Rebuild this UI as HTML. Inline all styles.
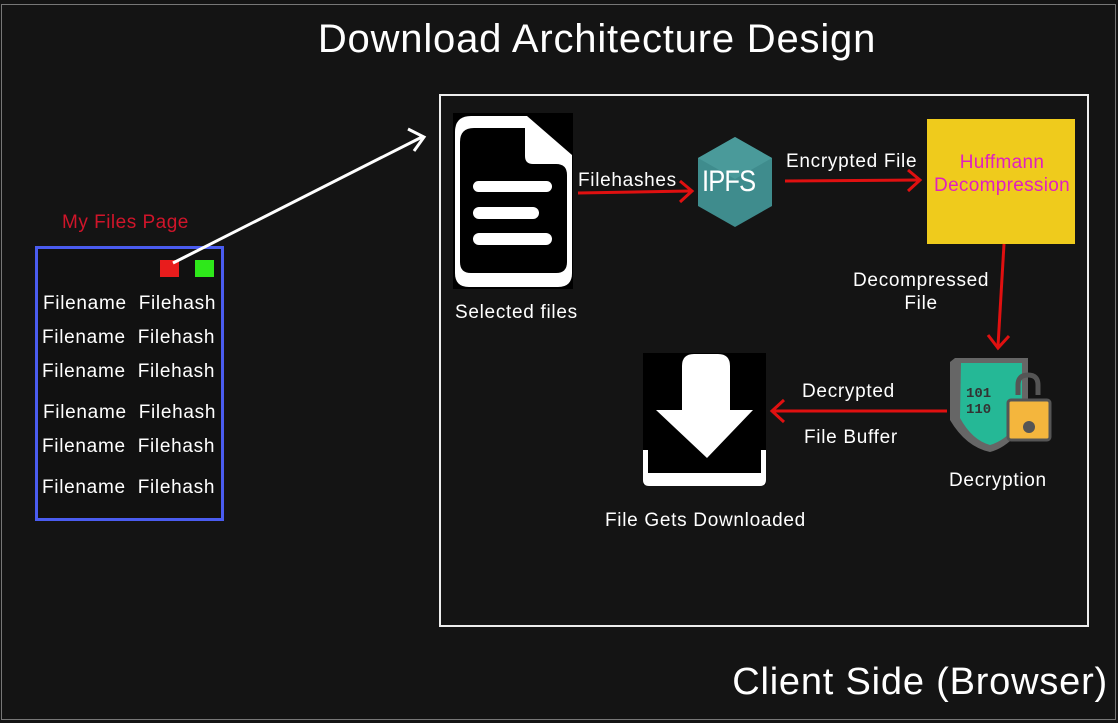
<!DOCTYPE html>
<html><head><style>
body{margin:0;width:1118px;height:723px;background:#141414;overflow:hidden;position:relative;font-family:"Liberation Sans",sans-serif;color:#fff}
.a{position:absolute;white-space:nowrap}
.t{font-size:19px;letter-spacing:0.7px}
</style></head><body>
<div class="a" style="left:1px;top:4px;width:1113px;height:714px;border:1px solid #777"></div>
<div class="a" style="left:0;top:17px;width:1194px;text-align:center;font-size:40px;letter-spacing:0.8px">Download Architecture Design</div>
<div class="a" style="left:439px;top:94px;width:646px;height:529px;border:2px solid #eee"></div>
<div class="a" style="right:10px;top:661px;font-size:38px;letter-spacing:0.8px">Client Side (Browser)</div>
<div class="a" style="left:62px;top:212px;font-size:19px;letter-spacing:0.5px;color:#d0152a">My Files Page</div>
<div class="a" style="left:35px;top:246px;width:183px;height:269px;border:3px solid #4a5cf0;background:#111"></div>
<div class="a" style="left:160px;top:260px;width:19px;height:17px;background:#e81c1c"></div>
<div class="a" style="left:195px;top:260px;width:19px;height:17px;background:#2ee81a"></div>
<div class="a t" style="left:43px;top:293px">Filename&nbsp; Filehash</div>
<div class="a t" style="left:42px;top:327px">Filename&nbsp; Filehash</div>
<div class="a t" style="left:42px;top:361px">Filename&nbsp; Filehash</div>
<div class="a t" style="left:43px;top:402px">Filename&nbsp; Filehash</div>
<div class="a t" style="left:42px;top:436px">Filename&nbsp; Filehash</div>
<div class="a t" style="left:42px;top:477px">Filename&nbsp; Filehash</div>
<svg class="a" style="left:0;top:0" width="1118" height="723">
<line x1="173" y1="263" x2="422" y2="137" stroke="#fff" stroke-width="3"/>
<polyline points="408,129 424,137 414,151" fill="none" stroke="#fff" stroke-width="3"/>
<rect x="453" y="113" width="120" height="176" fill="#000"/>
<path d="M455 132 Q455 116 471 116 H527 L572 155 V273 Q572 287 558 287 H469 Q455 287 455 273Z" fill="#fff"/>
<path d="M460 142 Q460 128 474 128 H525 V156 Q525 164 533 164 H556 Q567 164 567 175 V262 Q567 273 556 273 H471 Q460 273 460 262Z" fill="#000"/>
<rect x="473" y="181" width="79" height="11" rx="5.5" fill="#fff"/>
<rect x="473" y="207" width="66" height="12" rx="6" fill="#fff"/>
<rect x="473" y="233" width="79" height="12" rx="6" fill="#fff"/>
<line x1="578" y1="193" x2="690" y2="191" stroke="#e01010" stroke-width="3"/>
<polyline points="680,181 692,191 680,202" fill="none" stroke="#e01010" stroke-width="3"/>
<polygon points="735,137 772,158 772,206 735,227 698,206 698,158" fill="#3f8c8d"/>
<polygon points="735,137 772,158 735,179 698,158" fill="#4a9a9a"/>
<line x1="785" y1="181" x2="918" y2="180" stroke="#e01010" stroke-width="3"/>
<polyline points="908,170 920,180 908,191" fill="none" stroke="#e01010" stroke-width="3"/>
<rect x="927" y="119" width="148" height="125" fill="#efcb1c"/>
<line x1="1004" y1="244" x2="998" y2="346" stroke="#e01010" stroke-width="3"/>
<polyline points="988,335 998,348 1009,336" fill="none" stroke="#e01010" stroke-width="3"/>
<path d="M955 358 H1028 V420 Q1010 447 990 452 Q966 447 950 420 V362Z" fill="#666"/>
<path d="M961 363 H1022 V418 Q1008 440 990 445 Q972 440 960 418Z" fill="#25b896"/>
<path d="M1018 395 V385 Q1018 375 1028 375 Q1038 375 1038 385 V395" fill="none" stroke="#555" stroke-width="5"/>
<rect x="1008" y="400" width="42" height="40" rx="3" fill="#f4b63d" stroke="#555" stroke-width="3"/>
<circle cx="1029" cy="427" r="6" fill="#555"/>
<text x="966" y="397" font-family="Liberation Mono" font-weight="bold" font-size="14" fill="#333">101</text>
<text x="966" y="413" font-family="Liberation Mono" font-weight="bold" font-size="14" fill="#333">110</text>
<line x1="947" y1="411" x2="772" y2="411" stroke="#e01010" stroke-width="3"/>
<polyline points="784,400 772,411 784,422" fill="none" stroke="#e01010" stroke-width="3"/>
<rect x="643" y="353" width="123" height="132" fill="#000"/>
<path d="M643 450 V480 Q643 486 649 486 H760 Q766 486 766 480 V450 H761 V473 H648 V450Z" fill="#fff"/>
<path d="M682 366 Q682 354 694 354 H718 Q730 354 730 366 V410 H753 L707 458 L656 410 H682Z" fill="#fff"/>
</svg>
<div class="a" style="left:702px;top:165px;font-size:30px;color:#fff;letter-spacing:-1px;transform:scaleX(0.85);transform-origin:left">IPFS</div>
<div class="a t" style="left:578px;top:170px">Filehashes</div>
<div class="a t" style="left:786px;top:151px">Encrypted File</div>
<div class="a" style="left:927px;top:151px;width:150px;text-align:center;font-size:19px;letter-spacing:0.3px;color:#e020c0;line-height:23px">Huffmann<br>Decompression</div>
<div class="a t" style="left:853px;top:269px;text-align:center;line-height:23px">Decompressed<br>File</div>
<div class="a t" style="left:455px;top:302px">Selected files</div>
<div class="a t" style="left:802px;top:381px">Decrypted</div>
<div class="a t" style="left:804px;top:427px">File Buffer</div>
<div class="a t" style="left:949px;top:470px">Decryption</div>
<div class="a t" style="left:605px;top:510px">File Gets Downloaded</div>
</body></html>
